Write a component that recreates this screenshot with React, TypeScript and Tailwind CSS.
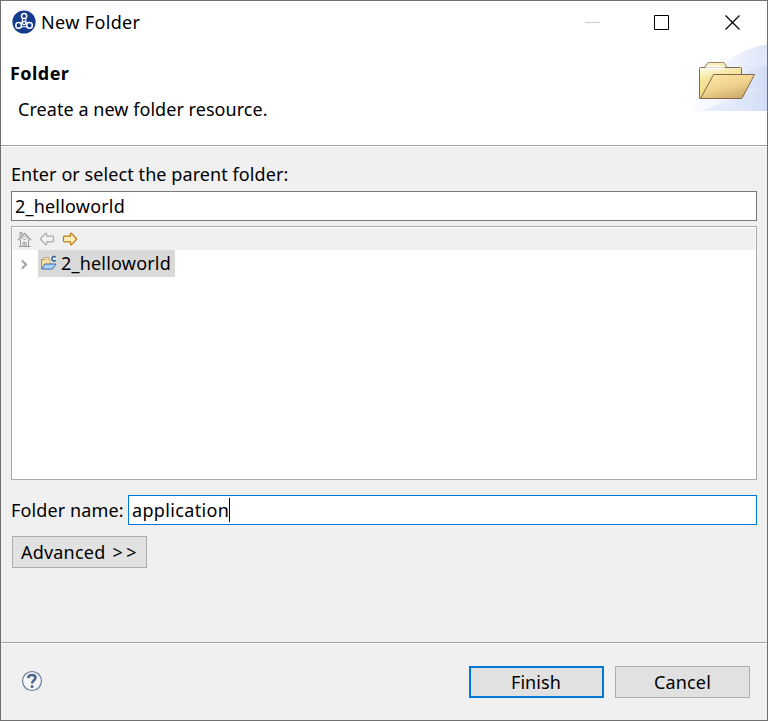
import React from "react";

function AppIcon() {
  return (
    <svg width="24" height="24" viewBox="0 0 24 24" fill="none">
      <circle cx="12" cy="12" r="11.6" fill="#143a8c" />
      <g stroke="#fff" strokeWidth="1.5">
        <path d="M10.6 8.5L10.2 11.6M13.6 8.5L14 11.6M8.4 13L10.2 12M15.8 13L14 12M9.4 16.8h5.2" strokeWidth="1.1" />
        <circle cx="12.1" cy="6" r="2.6" />
        <circle cx="6.6" cy="15.4" r="2.8" />
        <circle cx="17.5" cy="15.4" r="2.8" />
        <circle cx="12.1" cy="13" r="1.7" strokeWidth="1.2" />
      </g>
    </svg>
  );
}

function FolderBanner() {
  return (
    <svg width="75" height="66" viewBox="0 0 75 66" fill="none">
      <defs>
        <linearGradient id="sky" x1="0" y1="0" x2="1" y2="0">
          <stop offset="0" stopColor="#f8faff" />
          <stop offset="0.55" stopColor="#edf2fc" />
          <stop offset="1" stopColor="#d3def5" />
        </linearGradient>
        <linearGradient id="back" x1="0" y1="0" x2="0.3" y2="1">
          <stop offset="0" stopColor="#fffef0" />
          <stop offset="0.35" stopColor="#f5e6a0" />
          <stop offset="1" stopColor="#efd873" />
        </linearGradient>
        <linearGradient id="front" x1="0.2" y1="0" x2="0.8" y2="1">
          <stop offset="0" stopColor="#fbe5a5" />
          <stop offset="0.5" stopColor="#f0d28c" />
          <stop offset="1" stopColor="#c9a567" />
        </linearGradient>
      </defs>
      <path d="M0 66C3 52 9 42 20 31C38 12 55 2 75 0V66Z" fill="url(#sky)" />
      <path d="M0 66C3 52 9 42 20 31C38 12 55 2 75 0V2C61 8 52 18 46 29L20 66Z" fill="#fff" fillOpacity="0.2" />
      <path d="M75 2C61 8 52 18 46 29C56 25 65 22 75 21Z" fill="#e6edfa" fillOpacity="0.65" />
      <path d="M75 21C55 25 36 34 24 48C40 46 57 43 71 43C58 50 36 54 10 66H75Z" fill="#cedaf4" fillOpacity="0.3" />
      <g transform="translate(2 1)">
        <path d="M10 22L14 16.5H30L33.5 22Z" fill="#f8efba" stroke="#9b846c" strokeLinejoin="round" />
        <path d="M5.5 22.5Q5.5 21.5 6.5 21.5H46.5Q47.5 21.5 47.5 22.5V52.5H5.5Z" fill="url(#back)" stroke="#806856" />
        <path d="M6.5 52.5L19.5 28.5H60.5L48.5 51.5Q48 52.5 46.5 52.5Z" fill="url(#front)" stroke="#85654f" strokeLinejoin="round" />
        <ellipse cx="21" cy="21.5" rx="10" ry="2" fill="#fff" fillOpacity="0.75" />
      </g>
    </svg>
  );
}

function HomeIcon() {
  return (
    <svg width="16" height="16" viewBox="0 0 16 16" fill="none" stroke="#9a9a9a">
      <path d="M4 6V1.5h2V4" />
      <path d="M2 9L8.5 2.5L15 9" strokeWidth="1.3" />
      <path d="M4 9.5L8.5 5L13 9.5" strokeWidth="0.8" />
      <path d="M4.5 9v6.5h8V9M3 15.5h11.5" />
      <path d="M7 15.5v-4h3v4M7.5 8.5h2" />
      <path d="M8 12.5h1v2H8z" fill="#9a9a9a" stroke="none" />
    </svg>
  );
}

function ArrowIcon({ back = false }: { back?: boolean }) {
  return (
    <svg width="16" height="16" viewBox="0 0 16 16" className={back ? "-scale-x-100" : ""}>
      <path
        d="M2.2 5.2H8.5V2.3H9.6L14.7 8L9.6 13.7H8.5V10.8H2.2L1.5 10V6Z"
        fill={back ? "#f2f2f2" : "#ffefb8"}
        stroke={back ? "#aaaaaa" : "#b97b11"}
        strokeWidth="1.2"
        strokeLinejoin="round"
      />
    </svg>
  );
}

function ProjectIcon() {
  return (
    <svg width="17" height="16" viewBox="0 0 17 16" fill="none">
      <path d="M1.5 13.5V4.5h7.5L11 6v4" fill="#f7dfa3" stroke="#b28d58" />
      <path d="M3.5 4.5L4.5 2.5h4l1 2" fill="#fff4cc" stroke="#c2a36b" />
      <path d="M1.7 14L4.7 9H16L12.5 14Z" fill="#a9d3f7" stroke="#3f6bb0" strokeLinejoin="round" />
      <path d="M10.5 0h6v7.5h-6z" fill="#e4e8ee" />
      <path d="M15.7 2.1Q14.6 1 13.3 1.5Q11.8 2.2 12 4.1Q12.3 6.2 14.2 6.1Q15.1 6 15.8 5.3" stroke="#2f6699" strokeWidth="1.6" />
    </svg>
  );
}

export default function App() {
  return (
    <div
      className="flex h-[721px] w-[768px] flex-col border border-[#707070] bg-[#f0f0f0] text-[18px] leading-6 text-black"
      style={{ fontFamily: '"Noto Sans", "Open Sans", sans-serif' }}
    >
      <header className="flex h-[146px] shrink-0 flex-col border-b border-white bg-white">
        <div className="flex h-[44px] items-start pl-[11px] pr-[26px]">
          <div className="mt-[9px]"><AppIcon /></div>
          <h1 className="ml-[5px] mt-[9px] tracking-[0.35px] whitespace-nowrap">New Folder</h1>
          <div className="ml-auto mt-[13px] flex">
            <svg className="mr-[53px]" width="16" height="16"><path d="M0 8.5h15" stroke="#cccccc" /></svg>
            <svg width="16" height="16"><path d="M.5 1.5h14v14H.5z" fill="none" stroke="#000" /></svg>
            <svg className="ml-[54px]" width="17" height="17"><path d="M1.5 1.5l14 14M15.5 1.5l-14 14" stroke="#000" strokeWidth="1.2" /></svg>
          </div>
        </div>
        <div className="flex h-[101px] justify-between border-b border-[#a0a0a0]">
          <div className="pl-[9px] pt-[16px]">
            <h2 className="font-bold tracking-[0.45px] whitespace-nowrap">Folder</h2>
            <p className="mt-3 pl-2 tracking-[0.05px] whitespace-nowrap">Create a new folder resource.</p>
          </div>
          <FolderBanner />
        </div>
      </header>

      <main className="flex h-[495px] shrink-0 flex-col px-[10px] pt-[15px]">
        <label className="tracking-[0.08px] whitespace-nowrap">Enter or select the parent folder:</label>
        <div className="mt-[5px] flex h-[30px] shrink-0 items-center border border-[#7a7a7a] bg-white pl-[3px]">
          <span className="tracking-[0.2px]">2_helloworld</span>
        </div>
        <section className="mt-[5px] h-[254px] shrink-0 border border-[#a9a9b0] bg-white p-px">
          <div className="flex h-[22px] items-center gap-[7px] bg-[#f0f0f0] pl-[3px]">
            <HomeIcon />
            <ArrowIcon back />
            <ArrowIcon />
          </div>
          <div className="flex h-[27px] items-center">
            <svg width="25" height="16" fill="none"><path d="M9 4.5l4 4-4 4" stroke="#a0a0a0" strokeWidth="2" /></svg>
            <div className="flex h-[27px] w-[137px] items-start bg-[#d9d9d9] pl-[2px]">
              <div className="mt-[5px]"><ProjectIcon /></div>
              <span className="ml-[4px] mt-px tracking-[0.2px] whitespace-nowrap">2_helloworld</span>
            </div>
          </div>
        </section>
        <div className="mt-[15px] flex h-[30px] shrink-0 items-center">
          <label className="w-[117px] shrink-0 tracking-[0.12px] whitespace-nowrap">Folder name:</label>
          <div className="flex h-[30px] flex-1 items-center border border-[#0078d7] bg-white pl-[3px]">
            <span className="tracking-[0.35px]">application</span>
            <i className="h-6 w-px bg-black" />
          </div>
        </div>
        <button className="ml-px mt-[11px] flex h-[32px] w-[135px] shrink-0 items-center border border-[#adadad] bg-[#e1e1e1] pl-[8px] whitespace-nowrap">
          <span className="tracking-[0.2px]">Advanced</span>
          <span className="ml-[7px] tracking-[3.5px]">&gt;&gt;</span>
        </button>
      </main>

      <footer className="flex flex-1 items-start border-t border-[#a0a0a0] pl-[20px] pr-[17px] pt-[23px] shadow-[inset_0_1px_0_#fff]">
        <svg className="mt-[4px]" width="22" height="22" viewBox="0 0 22 22" fill="none">
          <circle cx="11" cy="11" r="9.5" fill="#f5f5f5" stroke="#6c7c9c" strokeWidth="1.2" />
          <path d="M7.2 8.2C7.4 5.7 9 4.9 11 4.9C13.3 4.9 14.5 6 14.5 7.8C14.5 10.3 11.1 10.2 11.1 13.4" stroke="#4d6390" strokeWidth="2.5" />
          <circle cx="11" cy="16.4" r="1.5" fill="#4d6390" />
        </svg>
        <button className="ml-auto flex h-[32px] w-[135px] items-center justify-center border-2 border-[#0078d7] bg-[#e1e1e1] pr-px tracking-[0.1px]">Finish</button>
        <button className="ml-[11px] flex h-[32px] w-[135px] items-center justify-center border border-[#adadad] bg-[#e1e1e1] tracking-[0.15px]">Cancel</button>
      </footer>
    </div>
  );
}
